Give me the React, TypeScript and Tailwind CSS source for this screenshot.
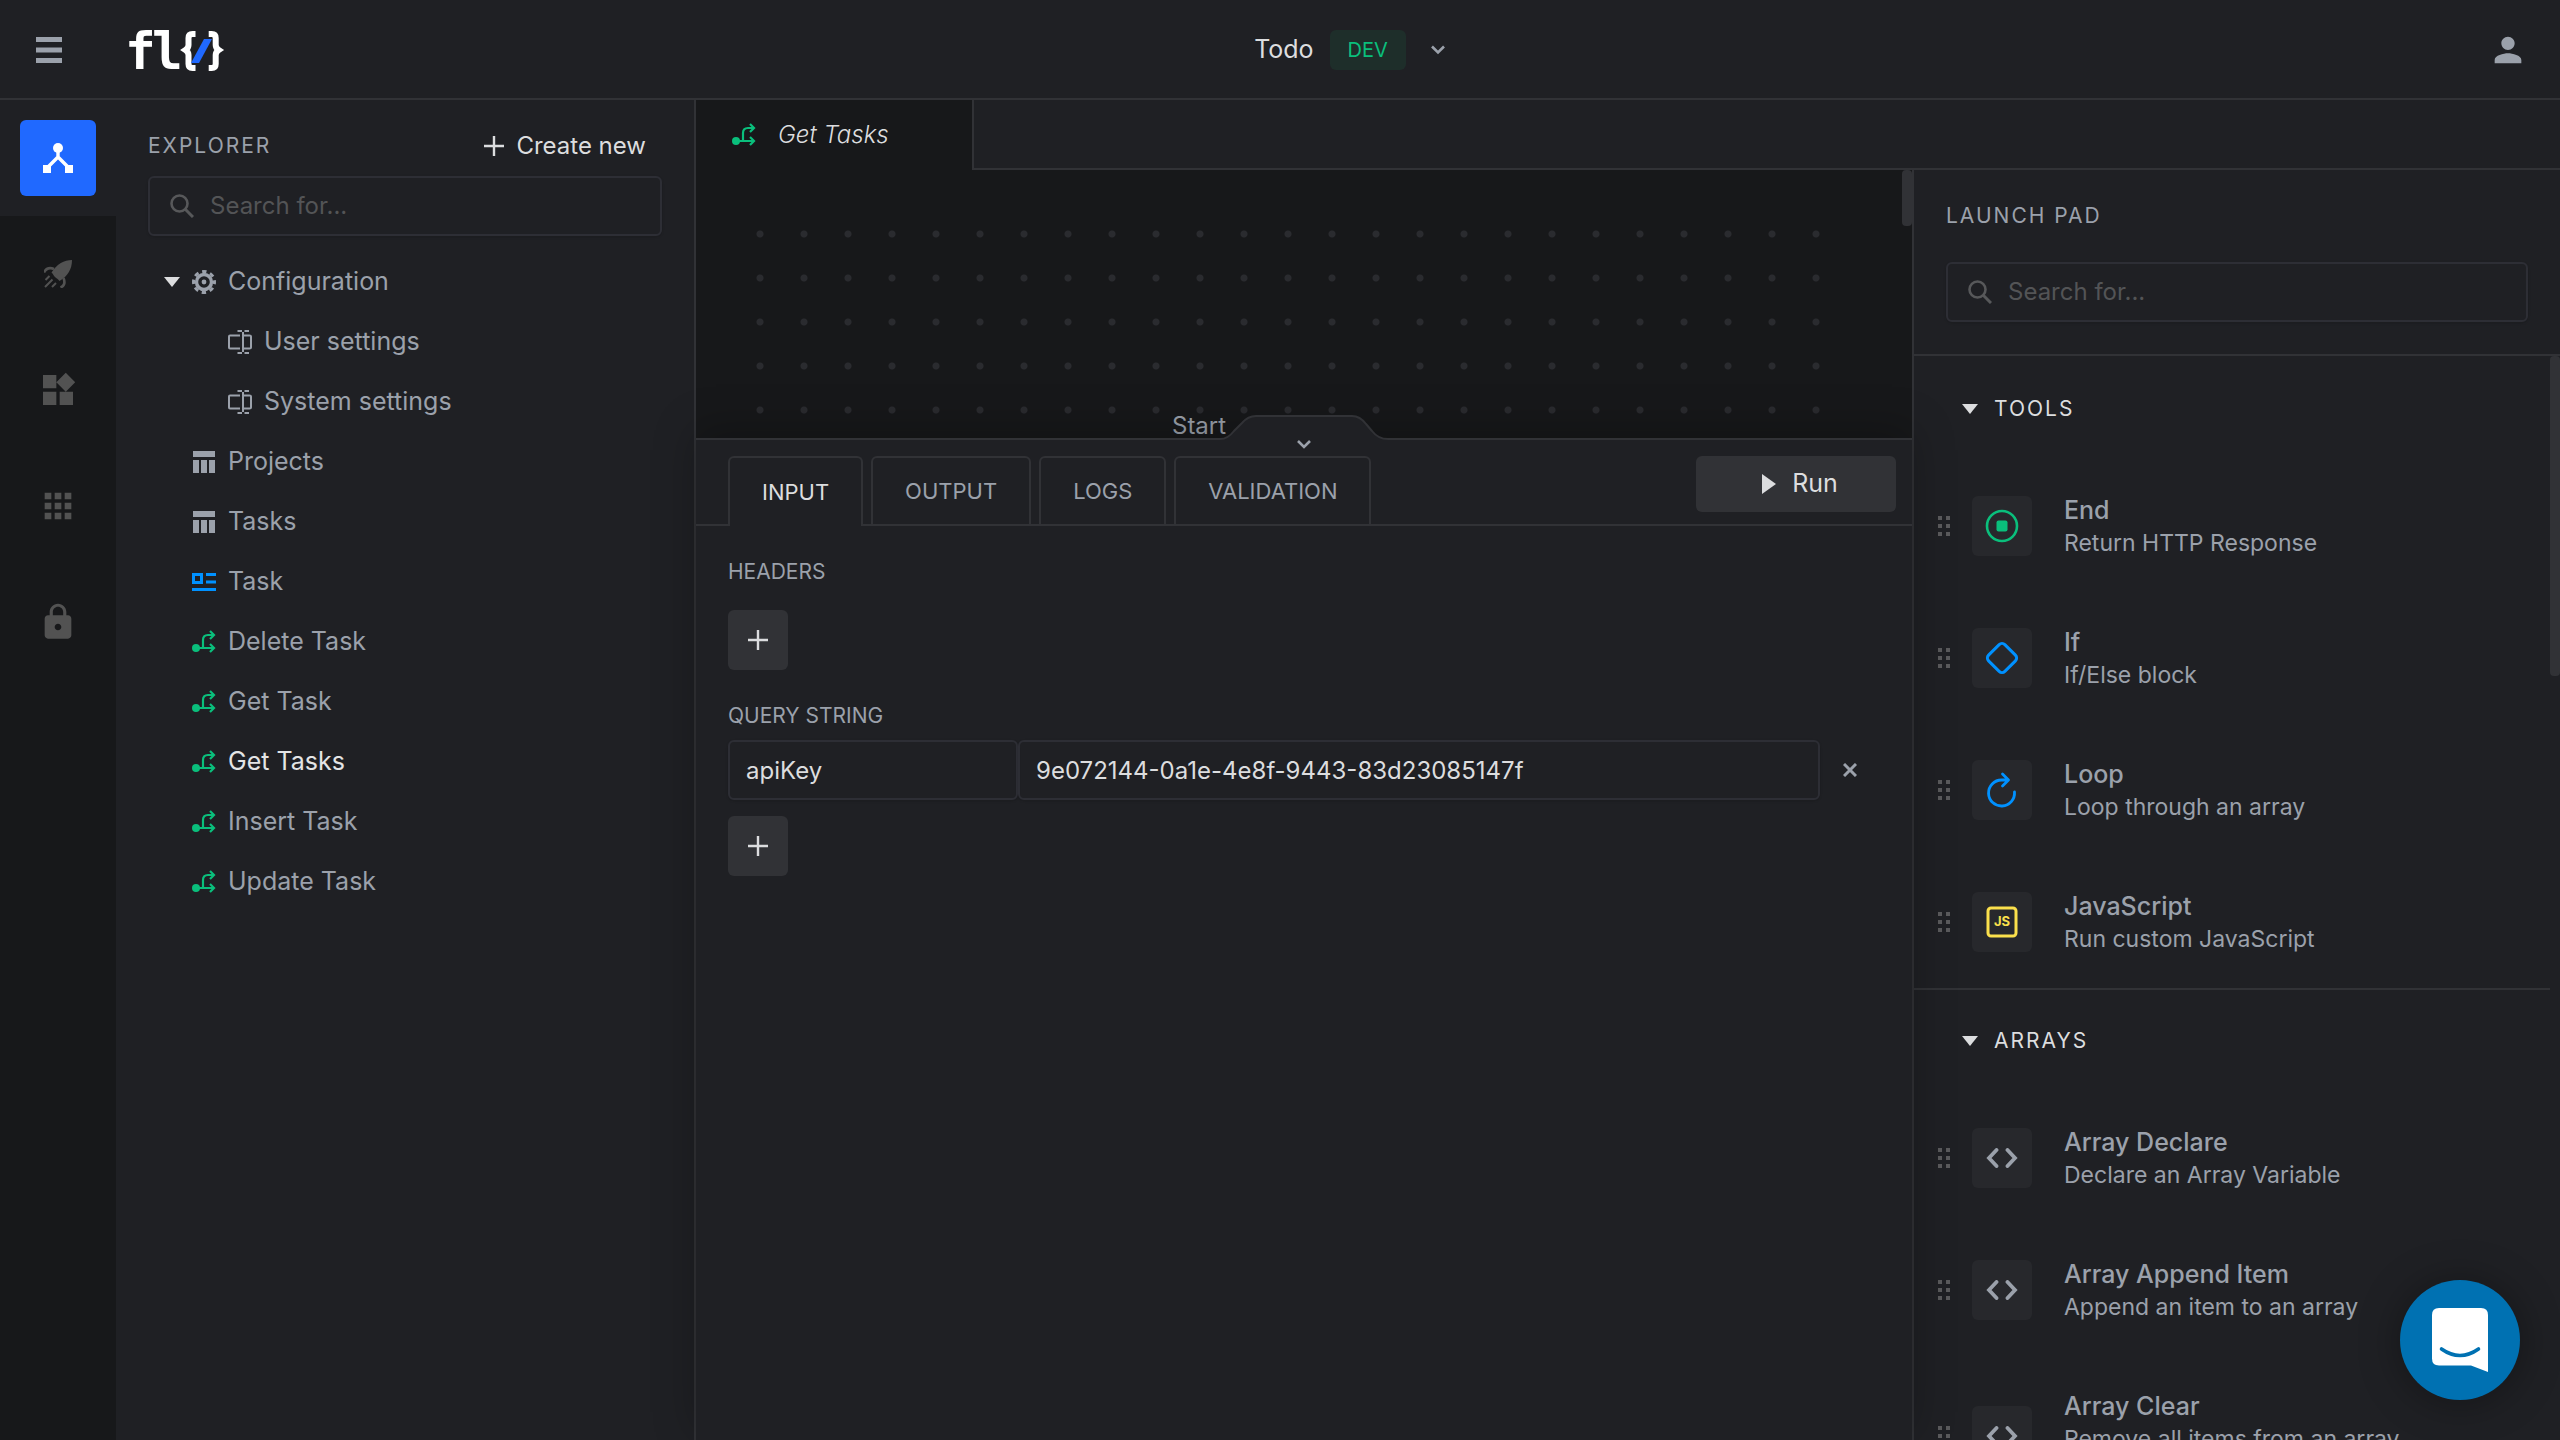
import React from 'react';
import { MdApps, MdLock, MdPerson, MdWidgets } from 'react-icons/md';

type IconProps = {
	className?: string,
}

type TreeItem = {
	label: string,
	icon: React.FC<IconProps>,
	color: string,
	nested?: boolean,
	open?: boolean,
	active?: boolean,
}

type Tool = {
	title: string,
	description: string,
	icon: React.FC<IconProps>,
	textHeight?: string,
}

const Logo = () => (
	<svg width="98" height="44" viewBox="0 0 98 44" role="img" aria-label="flo" className="overflow-visible">
		<text x="-1 26" y="41" fill="#fff" fontSize="51" fontWeight="700" fontFamily="'DejaVu Sans Mono', monospace">fl</text>
		<path d="M69.500 6h-3q-4 0-4 4v7q0 3-3 5q3 2 3 5v9q0 4 4 4h3" fill="none" stroke="#fff" strokeWidth="6" />
		<path d="M82.700 6h3q4 0 4 4v7q0 3 3 5q-3 2-3 5v9q0 4-4 4h-3" fill="none" stroke="#fff" strokeWidth="6" />
		<path d="M78 11h8L73 35h-8z" fill="#2069ff" />
	</svg>
);

const MenuIcon = () => (
	<svg width="28" height="28" viewBox="0 0 28 28" fill="#9ba1ab">
		<path d="M1 1h26v5H1zM1 11.500h26v5H1zM1 22h26v5H1z" />
	</svg>
);

const NetworkIcon = () => (
	<svg width="30" height="30" viewBox="0 0 30 30" fill="#fff">
		<circle cx="15" cy="5" r="5" />
		<path d="M0 22h8v8H0zM22 22h8v8h-8z" />
		<path d="M15 8v7M4 25l11-11l11 11" fill="none" stroke="#fff" strokeWidth="3.400" />
	</svg>
);

const RocketIcon = () => (
	<svg width="28" height="28" viewBox="0 0 28 28" fill="none" stroke="currentColor" strokeWidth="2">
		<path d="M28 0c-8 0-15 4-20.500 12.500c2 2 2 3 3.500 4.500s3 2 4.500 4C24 16 28 9 28 0z" fill="currentColor" stroke="none" />
		<path d="M0 12.500c2-4 5-5.500 10-3.500M19.500 18c2 5 .5 8-3 9.500" strokeWidth="2.600" />
		<path d="M1 27l7.500-7.500M1.500 20l4-4M8 27l4-4" />
	</svg>
);

const GearIcon: React.FC<IconProps> = ({ className }: IconProps) => (
	<svg className={className} width="24" height="24" viewBox="0 0 24 24" fill="none" stroke="currentColor">
		<circle cx="12" cy="12" r="7.500" strokeWidth="3.400" />
		<circle cx="12" cy="12" r="10.500" strokeWidth="3" strokeDasharray="4.400 3.846" strokeDashoffset="2.200" />
		<circle cx="12" cy="12" r="2.400" fill="currentColor" stroke="none" />
	</svg>
);

const FieldIcon: React.FC<IconProps> = ({ className }: IconProps) => (
	<svg className={className} width="24" height="24" viewBox="0 0 24 24" fill="none" stroke="currentColor" strokeWidth="2">
		<path d="M12 5.500H2q-1 0-1 1v11q0 1 1 1h10M15 2v20M9.500 1h4.500M16.500 1H21M9.500 23h4.500M16.500 23H21M16 5.500h5.500q1.500 0 1.500 1v11q0 1-1.500 1H16" />
	</svg>
);

const TableIcon: React.FC<IconProps> = ({ className }: IconProps) => (
	<svg className={className} width="24" height="24" viewBox="0 0 24 24" fill="currentColor">
		<path d="M1 1h22v6H1zM1 10h6v13H1zM9 10h6v13H9zM17 10h6v13h-6z" />
	</svg>
);

const EntityIcon: React.FC<IconProps> = ({ className }: IconProps) => (
	<svg className={className} width="24" height="24" viewBox="0 0 24 24" fill="none" stroke="currentColor" strokeWidth="3">
		<path d="M1.500 4.500h8v8h-8zM14 4.500h10M14 12h10M0 19.500h24" />
	</svg>
);

const FlowIcon: React.FC<IconProps> = ({ className }: IconProps) => (
	<svg className={className} width="24" height="24" viewBox="0 0 24 24" fill="none" stroke="currentColor" strokeWidth="2.200">
		<circle cx="4" cy="18" r="4" fill="currentColor" stroke="none" />
		<path d="M4 18h18M11 18V10q0-5 5-5h6M18 1l4 4l-4 4M18 14l4 4l-4 4" />
	</svg>
);

const PlusIcon = () => (
	<svg width="20" height="20" viewBox="0 0 20 20" stroke="#dcdddf" strokeWidth="2.400">
		<path d="M10 0v20M0 10h20" />
	</svg>
);

const CaretIcon = () => (
	<svg width="16" height="10" viewBox="0 0 16 10" fill="#dcdddf">
		<path d="M0 0h16L8 10z" />
	</svg>
);

const ChevronIcon = () => (
	<svg width="16" height="10" viewBox="0 0 16 10" fill="none" stroke="#9ba1ab" strokeWidth="2.600">
		<path d="M2 1.500l6 6l6-6" />
	</svg>
);

const EndIcon = () => (
	<svg width="34" height="34" viewBox="0 0 34 34" fill="none" stroke="#0abf7c" strokeWidth="2.600">
		<circle cx="17" cy="17" r="15" />
		<rect x="11.500" y="11.500" width="11" height="11" rx="2" fill="#0abf7c" stroke="none" />
	</svg>
);

const IfIcon = () => (
	<svg width="36" height="36" viewBox="0 0 36 36" fill="none" stroke="#0091ff" strokeWidth="3">
		<rect x="6.500" y="6.500" width="23" height="23" rx="4" transform="rotate(45 18 18)" />
	</svg>
);

const LoopIcon = () => (
	<svg width="34" height="36" viewBox="0 0 34 36" fill="none" stroke="#0091ff" strokeWidth="2.800" strokeLinecap="round" strokeLinejoin="round">
		<path d="M29.500 20A13 13 0 1 1 16.500 8H23M17.500 2l6 6l-6 6" />
	</svg>
);

const JsIcon = () => (
	<svg width="32" height="32" viewBox="0 0 32 32">
		<rect x="2" y="2" width="28" height="28" rx="3" fill="none" stroke="#fbe04c" strokeWidth="3" />
		<text x="16" y="20" textAnchor="middle" fill="#fbe04c" fontSize="13" fontWeight="700">JS</text>
	</svg>
);

const CodeIcon = () => (
	<svg width="32" height="20" viewBox="0 0 32 20" fill="none" stroke="#9ba1ab" strokeWidth="3.800" strokeLinecap="round">
		<path d="M10.500 2L3 10l7.500 8M21.500 2l7.500 8l-7.500 8" />
	</svg>
);

const GripIcon = () => (
	<svg width="12" height="20" viewBox="0 0 12 20" fill="#5a5a5c">
		<path d="M0 0h4v4H0zM8 0h4v4H8zM0 8h4v4H0zM8 8h4v4H8zM0 16h4v4H0zM8 16h4v4H8z" />
	</svg>
);

const tree: TreeItem[] = [
	{ label: 'Configuration', icon: GearIcon, color: 'text-[#9ba1ab]', open: true },
	{ label: 'User settings', icon: FieldIcon, color: 'text-[#9ba1ab]', nested: true },
	{ label: 'System settings', icon: FieldIcon, color: 'text-[#9ba1ab]', nested: true },
	{ label: 'Projects', icon: TableIcon, color: 'text-[#9ba1ab]' },
	{ label: 'Tasks', icon: TableIcon, color: 'text-[#9ba1ab]' },
	{ label: 'Task', icon: EntityIcon, color: 'text-[#0091ff]' },
	{ label: 'Delete Task', icon: FlowIcon, color: 'text-[#0abf7c]' },
	{ label: 'Get Task', icon: FlowIcon, color: 'text-[#0abf7c]' },
	{ label: 'Get Tasks', icon: FlowIcon, color: 'text-[#0abf7c]', active: true },
	{ label: 'Insert Task', icon: FlowIcon, color: 'text-[#0abf7c]' },
	{ label: 'Update Task', icon: FlowIcon, color: 'text-[#0abf7c]' },
];

const tools: Tool[] = [
	{ title: 'End', description: 'Return HTTP Response', icon: EndIcon },
	{ title: 'If', description: 'If/Else block', icon: IfIcon },
	{ title: 'Loop', description: 'Loop through an array', icon: LoopIcon },
	{ title: 'JavaScript', description: 'Run custom JavaScript', icon: JsIcon },
];

const arrays: Tool[] = [
	{ title: 'Array Declare', description: 'Declare an Array Variable', icon: CodeIcon },
	{ title: 'Array Append Item', description: 'Append an item to an array', icon: CodeIcon },
	{ title: 'Array Clear', description: 'Remove all items from an array', icon: CodeIcon, textHeight: 'min-h-14' },
];

const railItems = [
	{ label: 'Deploy', icon: <RocketIcon /> },
	{ label: 'Modules', icon: <MdWidgets size={40} /> },
	{ label: 'Apps', icon: <MdApps size={40} /> },
	{ label: 'Security', icon: <MdLock size={40} /> },
];

const SearchBox = ({ id }: { id: string }) => (
	<div className="flex h-[60px] items-center gap-4 rounded-md border-2 border-[#2d2e35] px-5 shadow-sm">
		<svg width="24" height="24" viewBox="0 0 24 24" fill="none" stroke="#57585a" strokeWidth="2.600" className="shrink-0">
			<circle cx="9.500" cy="9.500" r="8" />
			<path d="M15 15l8 8" strokeWidth="3" />
		</svg>
		<input id={id} aria-label="Search" placeholder="Search for..." className="min-w-0 flex-1 bg-transparent text-[24px] leading-8 text-[#dcdddf] outline-none placeholder:text-[#535456]" />
	</div>
);

const AddButton = ({ label }: { label: string }) => (
	<button aria-label={label} className="flex h-15 w-15 items-center justify-center rounded-md bg-[#313236]">
		<PlusIcon />
	</button>
);

const TreeRow = ({ item }: { item: TreeItem }) => {
	const Icon = item.icon;
	return (
		<li>
			<button className={item.nested ? 'flex h-15 w-full items-center pl-28' : 'flex h-15 w-full items-center pl-12'}>
				{!item.nested && <span className="mr-3 w-4">{item.open && <CaretIcon />}</span>}
				<Icon className={item.color} />
				<span className={item.active ? 'ml-3 text-[25px] text-[#e4e5e6]' : 'ml-3 text-[25px]'}>{item.label}</span>
			</button>
		</li>
	);
};

const ToolGroup = ({ name, items }: { name: string, items: Tool[] }) => (
	<section className="border-b-2 border-[#313236]">
		<button className="flex h-[102px] w-full items-center gap-4 pl-12 text-[21px] tracking-[2px] text-[#dcdddf]">
			<CaretIcon />
			{name}
		</button>
		{items.map((item) => {
			const Icon = item.icon;
			return (
				<div key={item.title} className="flex items-center py-[35px] pr-8 pl-6">
					<GripIcon />
					<div className="ml-[22px] flex h-15 w-15 shrink-0 items-center justify-center rounded-md bg-[#27282c]">
						<Icon />
					</div>
					<div className="ml-8">
						<h3 className="mb-1 text-[25px] leading-[30px] font-medium">{item.title}</h3>
						<p className={item.textHeight ? 'min-h-14 text-[23px] leading-7' : 'text-[23px] leading-7'}>{item.description}</p>
					</div>
				</div>
			);
		})}
	</section>
);

const Header = () => (
	<header className="flex h-[100px] shrink-0 items-center border-b-2 border-[#313236] pt-[2px] pl-[35px]">
		<button aria-label="Menu"><MenuIcon /></button>
		<a href="#home" className="ml-[63px]"><Logo /></a>
		<div className="flex flex-1 items-center justify-center pr-3">
			<span className="text-[25px] text-[#dcdddf]">Todo</span>
			<span className="ml-4 flex h-10 items-center rounded-md bg-[#1e2e2a] px-[18px] text-[20px] text-[#0abf7c]">DEV</span>
			<button aria-label="Switch environment" className="ml-6"><ChevronIcon /></button>
		</div>
		<button aria-label="Account" className="mr-8 text-[#9ba1ab]"><MdPerson size={40} /></button>
	</header>
);

const Rail = () => (
	<nav className="flex w-[116px] shrink-0 flex-col bg-[#17181a]">
		<div className="bg-[#1f2024] p-5">
			<button aria-label="Explorer" className="flex h-19 w-19 items-center justify-center rounded-md bg-[#2069ff]">
				<NetworkIcon />
			</button>
		</div>
		{railItems.map((item) => (
			<button key={item.label} aria-label={item.label} className="flex h-29 items-center justify-center text-[#525252]">
				{item.icon}
			</button>
		))}
	</nav>
);

const Explorer = () => (
	<aside className="w-[580px] shrink-0 border-r-2 border-[#313236]">
		<div className="px-8 pt-7">
			<div className="mb-3 flex h-9 items-center justify-between pr-4">
				<h2 className="text-[21px] tracking-[2px]">EXPLORER</h2>
				<button className="flex items-center gap-3 text-[24px] text-[#dcdddf]">
					<PlusIcon />
					Create new
				</button>
			</div>
			<SearchBox id="explorer-search" />
		</div>
		<ul className="pt-4">
			{tree.map((item) => <TreeRow key={item.label} item={item} />)}
		</ul>
	</aside>
);

const Canvas = () => (
	<div className="relative h-[268px] overflow-hidden bg-[#17181a]">
		<div className="h-full pt-[42px] pr-[74px] pl-[42px]">
			<div className="h-full bg-[radial-gradient(circle,#2a2b2f_3px,transparent_4px)] bg-[length:44px_44px]" />
		</div>
		<span className="absolute bottom-0 left-[476px] text-[24px] leading-6">Start</span>
		<span className="absolute top-0 right-0 h-14 w-[10px] rounded bg-[#313236]" />
	</div>
);

const tabs = ['INPUT', 'OUTPUT', 'LOGS', 'VALIDATION'];

const RunPanel = () => (
	<div className="relative flex-1 border-t-2 border-[#313236] bg-[#1f2024] shadow-[0_-8px_40px_rgba(0,0,0,0.25)]">
		{/* handle that folds the panel */}
		<button aria-label="Collapse panel" className="absolute -top-[26px] left-1/2 -translate-x-1/2">
			<svg width="168" height="40" viewBox="0 0 168 40" fill="none">
				<path d="M0 27V25Q8 25 14 17L22 9Q28 2 36 2H132Q140 2 146 10L152 17Q158 25 168 25V27z" fill="#1f2024" />
				<path d="M0 25Q8 25 14 17L22 9Q28 2 36 2H132Q140 2 146 10L152 17Q158 25 168 25" stroke="#313236" strokeWidth="2" />
				<path d="M78 27l6 6l6-6" stroke="#9ba1ab" strokeWidth="2.600" />
			</svg>
		</button>
		<div className="flex h-[86px] items-end border-b-2 border-[#313236] pl-8">
			<div role="tablist" className="-mb-[2px] flex gap-2">
				{tabs.map((tab, i) => (
					<button
						key={tab}
						role="tab"
						aria-selected={i === 0}
						className={i === 0
							? 'h-[70px] rounded-t-md border-2 border-b-0 border-[#313236] bg-[#1f2024] px-8 text-[22px] text-[#dcdddf]'
							: 'h-[70px] rounded-t-md border-2 border-[#313236] px-8 text-[22px]'}
					>
						{tab}
					</button>
				))}
			</div>
			<button className="mr-4 mb-3 ml-auto flex h-14 w-[200px] items-center justify-center gap-4 rounded-md bg-[#313236] pl-2 text-[25px] text-[#dcdddf]">
				<svg width="14" height="20" viewBox="0 0 14 20" fill="currentColor"><path d="M0 0l14 10L0 20z" /></svg>
				Run
			</button>
		</div>
		<div className="px-8 pt-7">
			<h3 className="text-[21px] leading-9">HEADERS</h3>
			<div className="mt-5"><AddButton label="Add header" /></div>
			<h3 className="mt-7 text-[21px] leading-9">QUERY STRING</h3>
			<div className="mt-[6px] mb-4 flex items-center">
				<input aria-label="Key" defaultValue="apiKey" className="h-15 w-[290px] rounded-md border-2 border-[#2d2e35] bg-transparent px-4 text-[24px] text-[#dcdddf] shadow-sm outline-none" />
				<input aria-label="Value" defaultValue="9e072144-0a1e-4e8f-9443-83d23085147f" className="h-15 min-w-0 flex-1 rounded-md border-2 border-[#2d2e35] bg-transparent px-4 text-[24px] text-[#dcdddf] shadow-sm outline-none" />
				<button aria-label="Remove parameter" className="flex h-15 w-15 items-center justify-center">
					<svg width="14" height="14" viewBox="0 0 14 14" stroke="#9ba1ab" strokeWidth="3"><path d="M1 1l12 12M13 1L1 13" /></svg>
				</button>
			</div>
			<AddButton label="Add parameter" />
		</div>
	</div>
);

const LaunchPad = () => (
	<aside className="flex w-[648px] shrink-0 flex-col border-l-2 border-[#313236]">
		<div className="border-b-2 border-[#313236] px-8 pt-7 pb-8">
			<h2 className="mb-7 text-[21px] leading-9 tracking-[2px]">LAUNCH PAD</h2>
			<SearchBox id="launch-search" />
		</div>
		<div className="flex min-h-0 flex-1 overflow-hidden">
			<div className="flex-1 pt-[2px]">
				<ToolGroup name="TOOLS" items={tools} />
				<ToolGroup name="ARRAYS" items={arrays} />
			</div>
			<div className="h-80 w-[10px] rounded bg-[#313236]" />
		</div>
	</aside>
);

const App: React.FC = () => {
	return (
		<div className="flex h-screen flex-col overflow-hidden bg-[#1f2024] font-['Inter',sans-serif] text-[#9ba1ab]">
			<Header />
			<div className="flex min-h-0 flex-1">
				<Rail />
				<Explorer />
				<div className="flex min-w-0 flex-1 flex-col">
					<div className="flex h-[70px] shrink-0">
						<button className="flex w-[278px] items-center border-r-2 border-[#313236] bg-[#17181a] pl-9 text-[#dcdddf]">
							<FlowIcon className="text-[#0abf7c]" />
							<span className="ml-[22px] text-[24px] font-light italic">Get Tasks</span>
						</button>
						<div className="flex-1 border-b-2 border-[#313236]" />
					</div>
					<div className="flex min-h-0 flex-1">
						<main className="flex min-w-0 flex-1 flex-col">
							<Canvas />
							<RunPanel />
						</main>
						<LaunchPad />
					</div>
				</div>
			</div>
			<button aria-label="Open chat" className="fixed right-10 bottom-10 flex h-30 w-30 items-center justify-center rounded-full bg-[#0071b2] shadow-[0_2px_40px_rgba(0,0,0,0.35)]">
				<svg width="56" height="64" viewBox="0 0 56 64">
					<path d="M7 0h42q7 0 7 7v57l-17-6.500H7q-7 0-7-7V7q0-7 7-7z" fill="#fff" />
					<path d="M9.500 41q18.500 13 37 0" fill="none" stroke="#0071b2" strokeWidth="3.600" strokeLinecap="round" />
				</svg>
			</button>
		</div>
	);
};

export default App;
